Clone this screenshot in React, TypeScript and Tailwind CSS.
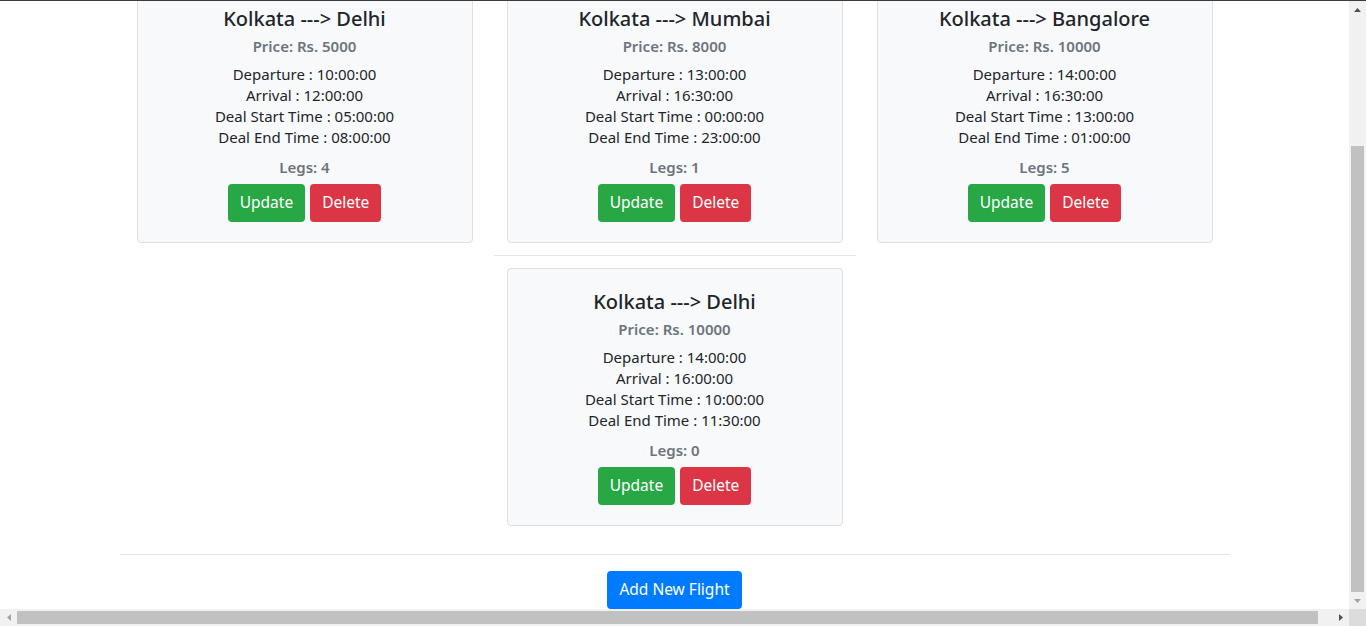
import React from 'react';

type Flight = {
    from: string;
    to: string;
    price: number;
    departure: string;
    arrival: string;
    dealStart: string;
    dealEnd: string;
    legs: number;
};

const flights: Flight[] = [
    { from: 'Kolkata', to: 'Delhi', price: 5000, departure: '10:00:00', arrival: '12:00:00', dealStart: '05:00:00', dealEnd: '08:00:00', legs: 4 },
    { from: 'Kolkata', to: 'Mumbai', price: 8000, departure: '13:00:00', arrival: '16:30:00', dealStart: '00:00:00', dealEnd: '23:00:00', legs: 1 },
    { from: 'Kolkata', to: 'Bangalore', price: 10000, departure: '14:00:00', arrival: '16:30:00', dealStart: '13:00:00', dealEnd: '01:00:00', legs: 5 },
    { from: 'Kolkata', to: 'Delhi', price: 10000, departure: '14:00:00', arrival: '16:00:00', dealStart: '10:00:00', dealEnd: '11:30:00', legs: 0 },
];

const FlightCard: React.FC<{ flight: Flight }> = ({ flight }) => (
    <div className="mx-[17px] rounded border border-[#dfdfdf] bg-[#f8f9fa] pt-[21px] pb-5 text-center">
        <h5 className="text-[20px] leading-6 font-medium text-[#212529]">
            {flight.from} ---&gt; {flight.to}
        </h5>
        <h6 className="mt-[3px] text-[15px] leading-6 font-semibold text-[#6c757d]">Price: Rs. {flight.price}</h6>
        <div className="mt-[6px] text-[15px] leading-[21px] text-[#212529]">
            <div>Departure : {flight.departure}</div>
            <div>Arrival : {flight.arrival}</div>
            <div>Deal Start Time : {flight.dealStart}</div>
            <div>Deal End Time : {flight.dealEnd}</div>
        </div>
        <h6 className="mt-[7px] text-[15px] leading-6 font-semibold text-[#6c757d]">Legs: {flight.legs}</h6>
        <div className="mt-[5px] flex justify-center gap-[5px]">
            <button className="h-[38px] rounded bg-[#28a745] px-3 text-[15.5px] text-white">Update</button>
            <button className="h-[38px] rounded bg-[#dc3545] px-3 text-[15.5px] text-white">Delete</button>
        </div>
    </div>
);

const Arrow: React.FC<{ dir: 'up' | 'down' | 'left' | 'right'; color: string }> = ({ dir, color }) => {
    const points = {
        up: '0,4 7,4 3.5,0',
        down: '0,0 7,0 3.5,4',
        left: '4,0 4,7 0,3.5',
        right: '0,0 0,7 4,3.5',
    }[dir];
    const vertical = dir === 'up' || dir === 'down';
    return (
        <svg width={vertical ? 7 : 4} height={vertical ? 4 : 7} viewBox={vertical ? '0 0 7 4' : '0 0 4 7'}>
            <polygon points={points} fill={color} />
        </svg>
    );
};

const App: React.FC = () => {
    return (
        <div
            className="flex h-[626px] w-[1366px] flex-col overflow-hidden bg-white"
            style={{ fontFamily: '"Noto Sans", "Open Sans", sans-serif' }}
        >
            {/* navbar edge */}
            <div className="h-px shrink-0 bg-[#3c3c3c]" />

            <div className="flex min-h-0 flex-1">
                <div className="min-w-0 flex-1 overflow-hidden">
                    <div className="mx-auto -mt-[16px] w-[1110px]">
                        <div className="grid grid-cols-3">
                            {flights.slice(0, 3).map((f, i) => (
                                <FlightCard key={i} flight={f} />
                            ))}
                        </div>

                        <div className="grid grid-cols-3">
                            <div />
                            <div>
                                <hr className="mx-1 mt-3 border-[#e5e5e5]" />
                                <div className="mt-3">
                                    <FlightCard flight={flights[3]} />
                                </div>
                            </div>
                            <div />
                        </div>

                        <hr className="mt-[28px] border-[#e5e5e5]" />

                        <div className="mt-4 flex justify-center">
                            <button className="h-[38px] rounded bg-[#007bff] px-3 text-[15.5px] text-white">Add New Flight</button>
                        </div>
                    </div>
                </div>

                {/* vertical scrollbar */}
                <div className="flex w-[17px] shrink-0 flex-col items-center bg-[#f1f1f1]">
                    <div className="flex h-[17px] items-center justify-center">
                        <Arrow dir="up" color="#505050" />
                    </div>
                    <div className="mt-[128px] flex-1 self-stretch px-[2px]">
                        <div className="h-full bg-[#c1c1c1]" />
                    </div>
                    <div className="flex h-[17px] items-center justify-center">
                        <Arrow dir="down" color="#a3a3a3" />
                    </div>
                </div>
            </div>

            {/* horizontal scrollbar */}
            <div className="flex h-[17px] shrink-0 bg-[#f1f1f1]">
                <div className="flex w-[17px] items-center justify-center">
                    <Arrow dir="left" color="#a3a3a3" />
                </div>
                <div className="flex flex-1 py-[2px] pr-[14px]">
                    <div className="flex-1 bg-[#c1c1c1]" />
                </div>
                <div className="flex w-[17px] items-center justify-center">
                    <Arrow dir="right" color="#505050" />
                </div>
                <div className="w-[17px] bg-[#dcdcdc]" />
            </div>
        </div>
    );
};

export default App;
